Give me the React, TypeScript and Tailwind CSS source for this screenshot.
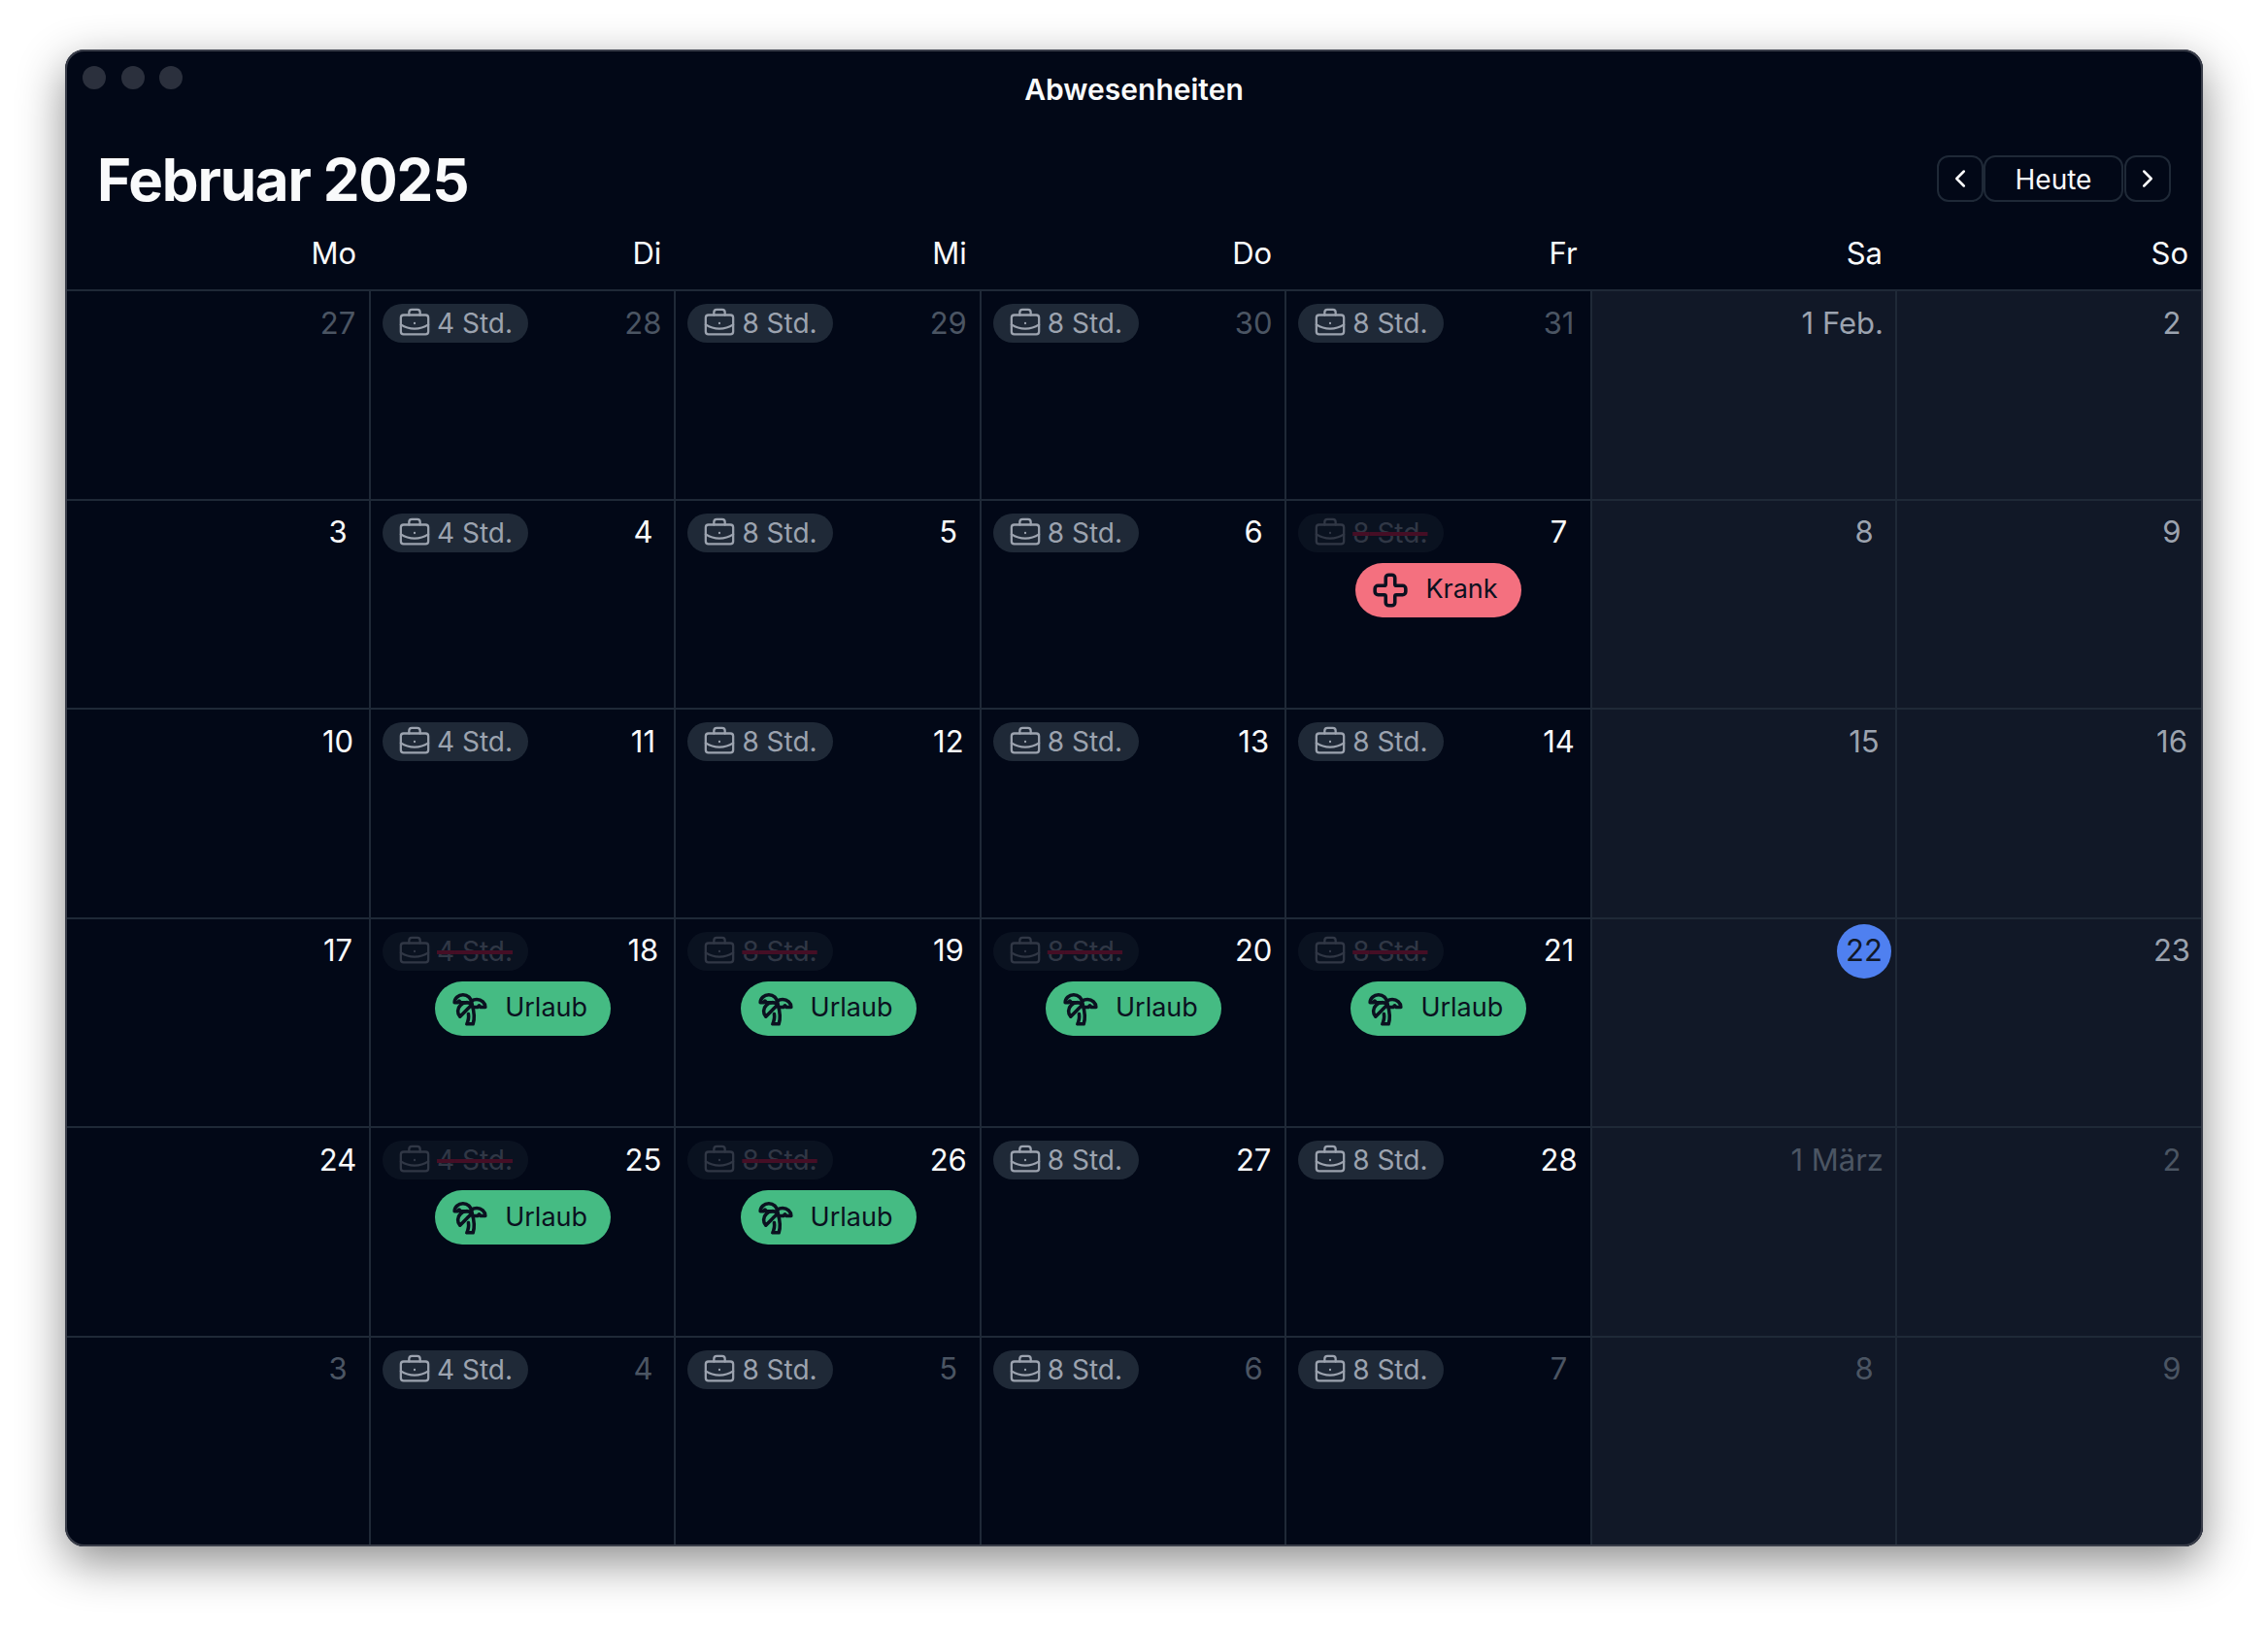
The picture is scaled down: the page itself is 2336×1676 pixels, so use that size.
import React from "react";
import { BriefcaseBusiness, ChevronLeft, ChevronRight, Cross, TreePalm } from "lucide-react";

type Day = {
  label: string;
  muted?: boolean;
  today?: boolean;
  hours?: number;
  off?: "krank" | "urlaub";
};

const weekdays = ["Mo", "Di", "Mi", "Do", "Fr", "Sa", "So"];

const hoursFor = [0, 4, 8, 8, 8, 0, 0];

const labels = [
  ["27", "28", "29", "30", "31", "1 Feb.", "2"],
  ["3", "4", "5", "6", "7", "8", "9"],
  ["10", "11", "12", "13", "14", "15", "16"],
  ["17", "18", "19", "20", "21", "22", "23"],
  ["24", "25", "26", "27", "28", "1 März", "2"],
  ["3", "4", "5", "6", "7", "8", "9"],
];

const offDays: Record<string, "krank" | "urlaub"> = {
  "1-4": "krank",
  "3-1": "urlaub",
  "3-2": "urlaub",
  "3-3": "urlaub",
  "3-4": "urlaub",
  "4-1": "urlaub",
  "4-2": "urlaub",
};

const isMuted = (row: number, col: number) => {
  if (row === 5) return true;
  if (row === 0 && col < 5) return true;
  if (row === 4 && col >= 5) return true;
  return false;
};

const HoursPill = ({ hours, off }: { hours: number; off: boolean }) => (
  <div className={`ml-[7px] flex h-10 w-[150px] items-center gap-[6px] rounded-full bg-[#1f2937] pl-4 text-[28px] text-[#9ca3af] ${off ? "opacity-30" : ""}`}>
    <BriefcaseBusiness size={34} strokeWidth={1.6} />
    <span className={off ? "line-through decoration-[#e11d48] decoration-[3.5px]" : ""}>{hours} Std.</span>
  </div>
);

const OffChip = ({ kind }: { kind: "krank" | "urlaub" }) =>
  kind === "krank" ? (
    <div className="mx-auto mt-[3px] flex h-14 w-[171px] items-center gap-[17px] rounded-full bg-[#f4707f] pl-[17px] text-[27px] text-[#0b1120]">
      <Cross size={38} strokeWidth={2.25} />
      <span>Krank</span>
    </div>
  ) : (
    <div className="mx-auto mt-[3px] flex h-14 w-[181px] items-center gap-[17px] rounded-full bg-[#45bb83] pl-[17px] text-[27px] text-[#0b1120]">
      <TreePalm size={38} strokeWidth={2.25} />
      <span>Urlaub</span>
    </div>
  );

const Cell = ({ day, col }: { day: Day; col: number }) => {
  const weekend = col >= 5;
  let color = "text-[#f9fafb]";
  if (day.muted) color = "text-[#4b5563]";
  else if (weekend) color = "text-[#9ca3af]";
  if (day.today) color = "bg-[#4f80f0] text-[#111827]";

  return (
    <div className={`border-b-2 border-[#1f2937] py-[5px] pl-[5px] pr-1 ${col < 6 ? "border-r-2" : ""} ${weekend ? "bg-[#111827]" : ""}`}>
      <div className="flex items-center justify-between">
        {day.hours ? <HoursPill hours={day.hours} off={!!day.off} /> : <div />}
        <div className={`flex h-14 min-w-14 items-center justify-center rounded-full text-[31px] ${color} ${day.label.length > 2 ? "px-2" : ""}`}>
          {day.label}
        </div>
      </div>
      {day.off && <OffChip kind={day.off} />}
    </div>
  );
};

const App = () => {
  const days: Day[][] = labels.map((week, row) =>
    week.map((label, col) => ({
      label,
      muted: isMuted(row, col),
      today: row === 3 && col === 5,
      hours: hoursFor[col],
      off: offDays[`${row}-${col}`],
    }))
  );

  return (
    <div className="h-[1676px] w-[2336px] bg-white pl-[67px] pt-[51px] font-['Inter',sans-serif]">
      <div className="flex h-[1542px] w-[2202px] flex-col overflow-hidden rounded-[20px] bg-[#020817] shadow-[0_16px_48px_rgba(0,0,0,0.45)] outline-2 -outline-offset-2 outline-[#3a3e4a]">
        <div className="relative h-[79px] shrink-0 pt-[26px] text-center text-[30px] font-semibold leading-none text-[#f9fafb]">
          <div className="absolute left-[18px] top-[17px] flex gap-[15.5px]">
            <span className="h-6 w-6 rounded-full bg-[#2b303d]" />
            <span className="h-6 w-6 rounded-full bg-[#2b303d]" />
            <span className="h-6 w-6 rounded-full bg-[#2b303d]" />
          </div>
          Abwesenheiten
        </div>

        <div className="flex h-[110px] shrink-0 items-center justify-between pl-[33px] pr-[33px]">
          <h1 className="text-[60px] font-bold tracking-[-0.02em] text-[#f9fafb]">Februar 2025</h1>
          <div className="-mt-[2px] flex items-center text-[#f9fafb]">
            <button className="flex h-12 w-12 items-center justify-center rounded-xl border-2 border-[#1f2937]">
              <ChevronLeft size={30} strokeWidth={2} />
            </button>
            <button className="flex h-12 w-[144px] items-center justify-center rounded-xl border-2 border-[#1f2937] pt-[1px] text-[28px]">
              Heute
            </button>
            <button className="ml-[1px] flex h-12 w-12 items-center justify-center rounded-xl border-2 border-[#1f2937]">
              <ChevronRight size={30} strokeWidth={2} />
            </button>
          </div>
        </div>

        <div className="grid h-[60px] shrink-0 grid-cols-[315px_repeat(5,minmax(0,1fr))_315px] border-b-2 border-[#1f2937]">
          {weekdays.map((d) => (
            <div key={d} className="pr-[15px] text-right text-[31px] leading-[42px] text-[#f9fafb]">
              {d}
            </div>
          ))}
        </div>

        <div className="grid flex-1 grid-cols-[315px_repeat(5,minmax(0,1fr))_315px] grid-rows-6">
          {days.map((week, row) =>
            week.map((day, col) => <Cell key={`${row}-${col}`} day={day} col={col} />)
          )}
        </div>
      </div>
    </div>
  );
};

export default App;
